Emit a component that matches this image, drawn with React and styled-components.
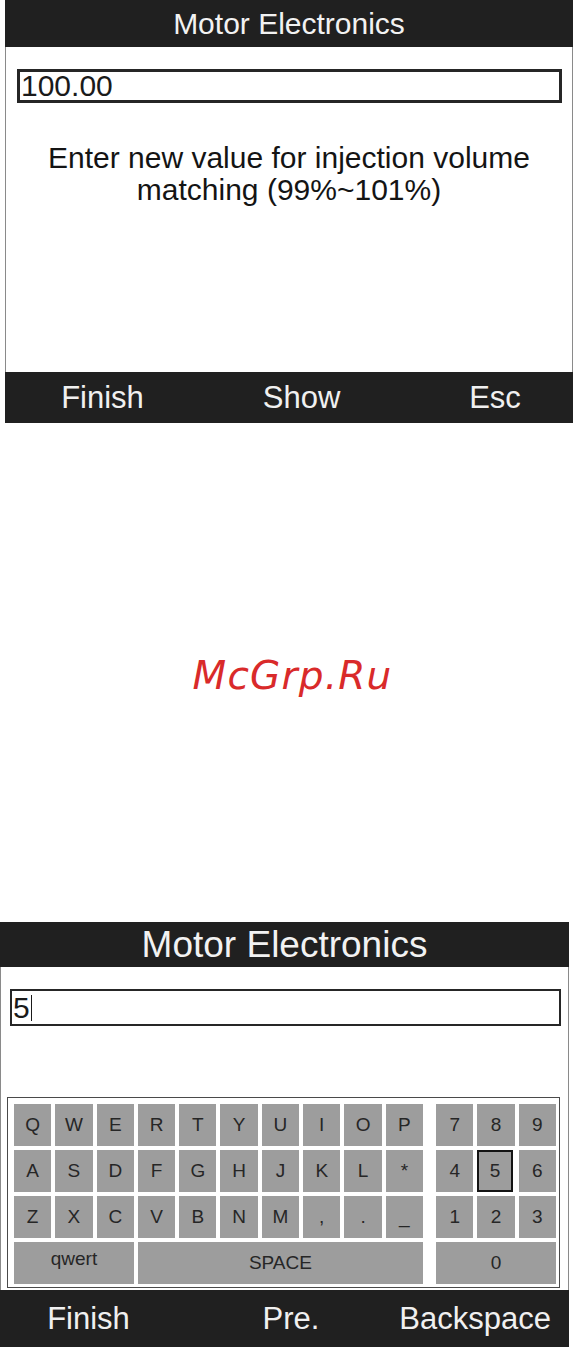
import styled, { createGlobalStyle } from 'styled-components';

const GlobalStyle = createGlobalStyle`
  html, body {
    margin: 0;
    padding: 0;
    background: #fff;
  }
  body {
    font-family: "Liberation Sans", Arial, sans-serif;
    color: #111;
  }
`;

const Page = styled.div`
  width: 575px;
  height: 1347px;
  overflow: hidden;
  display: flex;
  flex-direction: column;
`;

const Screen = styled.div`
  display: flex;
  flex-direction: column;
  width: ${(props) => props.$width}px;
  height: ${(props) => props.$height}px;
  margin-left: ${(props) => props.$left}px;
  background: #fff;
`;

const TitleBar = styled.div`
  height: ${(props) => props.$height}px;
  flex: none;
  background: #202020;
  color: #f2f2f2;
  font-size: ${(props) => props.$size}px;
  display: flex;
  align-items: center;
  justify-content: center;
  padding-top: 1px;
  box-sizing: border-box;
`;

const Body = styled.div`
  flex: 1;
  display: flex;
  flex-direction: column;
  padding-top: 22px;
  border-left: 1px solid #8a8a8a;
  border-right: 1px solid #8a8a8a;
  background: #fff;
`;

const InputBox = styled.div`
  height: ${(props) => props.$height}px;
  margin: 0 ${(props) => props.$right}px 0 ${(props) => props.$left}px;
  border: ${(props) => props.$border}px solid #262626;
  box-sizing: border-box;
  display: flex;
  align-items: center;
  padding-left: 1px;
  font-size: 30px;
  color: #1a1a1a;
  line-height: 1;
`;

const Caret = styled.span`
  display: inline-block;
  width: 1px;
  height: 26px;
  margin-left: 1px;
  background: #1a1a1a;
`;

const Message = styled.p`
  margin: 39px 0 0;
  font-size: 30px;
  line-height: 32px;
  text-align: center;
  color: #141414;
`;

const Footer = styled.div`
  height: ${(props) => props.$height}px;
  flex: none;
  background: #202020;
  color: #f0f0f0;
  font-size: 31px;
  display: grid;
  grid-template-columns: ${(props) => props.$cols};
  align-items: center;
`;

const SoftKey = styled.span`
  text-align: ${(props) => props.$align || 'center'};
  padding-left: ${(props) => props.$padL || 0}px;
  padding-right: ${(props) => props.$padR || 0}px;
  white-space: nowrap;
`;

const Gap = styled.div`
  height: 499px;
  flex: none;
  display: flex;
  align-items: center;
  justify-content: center;
  padding: 5px 0 0 10px;
  box-sizing: border-box;
`;

const Watermark = styled.span`
  font-family: "DejaVu Sans", Verdana, sans-serif;
  font-style: italic;
  font-size: 39px;
  color: #d92a2a;
  letter-spacing: 1.2px;
`;

const Keyboard = styled.div`
  margin: 71px 8px 0 6px;
  height: 191px;
  box-sizing: border-box;
  border: 1px solid #4a4a4a;
  padding: 6px 3px 3px 6px;
  display: flex;
  gap: 13px;
  background: #fff;
`;

const KeyGrid = styled.div`
  display: grid;
  grid-template-columns: repeat(${(props) => props.$cols}, 1fr);
  grid-auto-rows: 42px;
  gap: 4px;
  width: ${(props) => props.$width}px;
`;

const Key = styled.div`
  grid-column: span ${(props) => props.$span || 1};
  background: #9d9d9d;
  color: #262626;
  font-size: 19px;
  display: flex;
  align-items: center;
  justify-content: center;
  padding-bottom: ${(props) => props.$raise || 0}px;
  box-sizing: border-box;
  border: ${(props) => (props.$active ? '2px solid #141414' : 'none')};
  margin-right: ${(props) => (props.$active ? 2 : 0)}px;
`;

const letters = [
  ['Q', 'W', 'E', 'R', 'T', 'Y', 'U', 'I', 'O', 'P'],
  ['A', 'S', 'D', 'F', 'G', 'H', 'J', 'K', 'L', '*'],
  ['Z', 'X', 'C', 'V', 'B', 'N', 'M', ',', '.', '_'],
];

const numbers = ['7', '8', '9', '4', '5', '6', '1', '2', '3'];

const App = () => {
  return (
    <Page>
      <GlobalStyle />

      <Screen $width={568} $height={423} $left={5}>
        <TitleBar $height={47} $size={30}>Motor Electronics</TitleBar>
        <Body>
          <InputBox $height={34} $border={3} $left={11} $right={10}>
            100.00
          </InputBox>
          <Message>
            Enter new value for injection volume
            <br />
            matching (99%~101%)
          </Message>
        </Body>
        <Footer $height={51} $cols="195px 203px 1fr">
          <SoftKey>Finish</SoftKey>
          <SoftKey>Show</SoftKey>
          <SoftKey $padL={14}>Esc</SoftKey>
        </Footer>
      </Screen>

      <Gap>
        <Watermark>McGrp.Ru</Watermark>
      </Gap>

      <Screen $width={569} $height={425} $left={0}>
        <TitleBar $height={45} $size={37}>Motor Electronics</TitleBar>
        <Body>
          <InputBox $height={37} $border={2} $left={9} $right={7}>
            5<Caret />
          </InputBox>
          <Keyboard>
            <KeyGrid $cols={10} $width={409}>
              {letters.flat().map((k, i) => (
                <Key key={i}>{k}</Key>
              ))}
              <Key $span={3} $raise={8}>qwert</Key>
              <Key $span={7}>SPACE</Key>
            </KeyGrid>
            <KeyGrid $cols={3} $width={120}>
              {numbers.map((n) => (
                <Key key={n} $active={n === '5'}>
                  {n}
                </Key>
              ))}
              <Key $span={3}>0</Key>
            </KeyGrid>
          </Keyboard>
        </Body>
        <Footer $height={57} $cols="177px 210px 1fr">
          <SoftKey>Finish</SoftKey>
          <SoftKey $padL={18}>Pre.</SoftKey>
          <SoftKey $align="right" $padR={18}>
            Backspace
          </SoftKey>
        </Footer>
      </Screen>
    </Page>
  );
};

export default App;
